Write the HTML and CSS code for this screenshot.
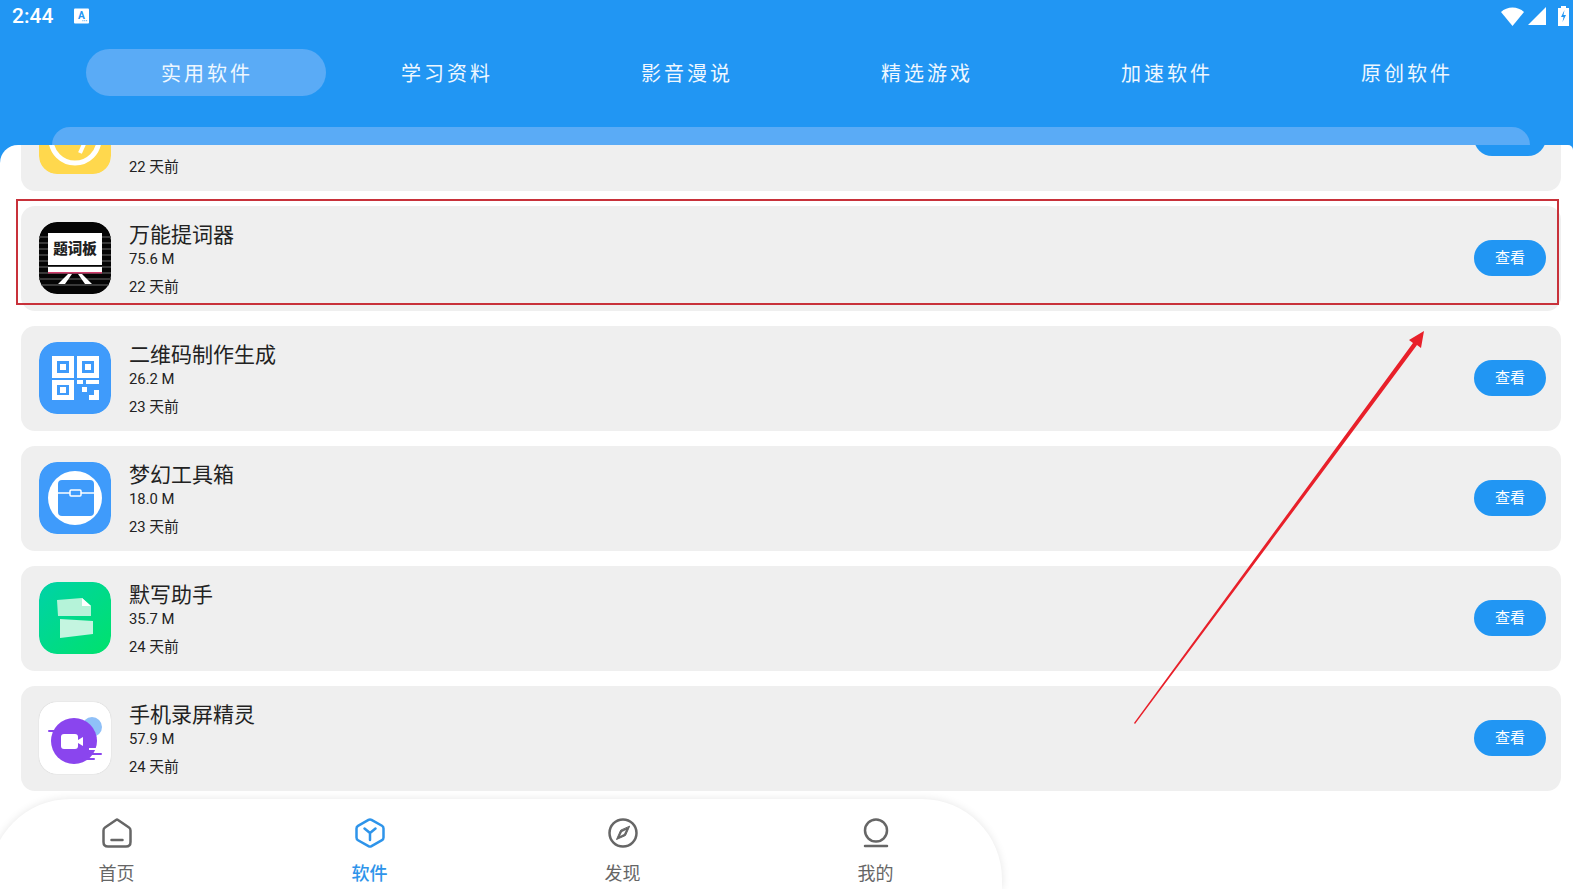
FILE: index.html
```html
<!DOCTYPE html>
<html lang="zh-CN">

<head>
    <meta charset="UTF-8">
    <title>软件</title>
    <link rel="stylesheet" href="styles.css">
</head>

<body>
    <header class="header">
        <div class="status">
            <span class="time">2:44</span>
            <svg class="status-a" viewBox="0 0 16 16">
                <rect width="16" height="16" rx="1" fill="#fff" />
                <text x="8" y="11" text-anchor="middle" class="status-a-text">A</text>
                <path d="M9 13h1M11 13h1M13 13h1" stroke="#2196f3" stroke-width="1" />
            </svg>
            <svg class="status-wifi" viewBox="0 0 23 19">
                <path d="M0 5C6-1 17-1 23 5L11.500 19Z" fill="#fff" />
            </svg>
            <svg class="status-signal" viewBox="0 0 18 18">
                <path d="M18 0V18H0Z" fill="#fff" />
            </svg>
            <svg class="status-battery" viewBox="0 0 11 20">
                <path d="M0 2H3V0H8V2H11V20H0Z" fill="#fff" />
                <path d="M6.500 4L3 11H5.500L4.500 16L8 9H5.500Z" fill="#2196f3" />
            </svg>
        </div>

        <nav class="tabs">
            <div class="tab tab-active">实用软件</div>
            <div class="tab">学习资料</div>
            <div class="tab">影音漫说</div>
            <div class="tab">精选游戏</div>
            <div class="tab">加速软件</div>
            <div class="tab">原创软件</div>
        </nav>

        <div class="header-bar"></div>
    </header>

    <main class="content">
        <div class="list">
            <div class="card">
                <svg class="app-icon" viewBox="0 0 72 72">
                    <rect width="72" height="72" rx="18" fill="#ffd84d" />
                    <circle cx="36" cy="37" r="24" fill="none" stroke="#fff" stroke-width="5" />
                    <path d="M45 42L41 51" stroke="#fff" stroke-width="4" />
                </svg>
                <div class="info">
                    <div class="name">&nbsp;</div>
                    <div class="size">&nbsp;</div>
                    <div class="date">22 天前</div>
                </div>
                <div class="view-btn"></div>
            </div>

            <div class="card">
                <svg class="app-icon" viewBox="0 0 72 72">
                    <rect width="72" height="72" rx="18" fill="#050505" />
                    <path d="M0 15H72M0 21H72M0 27H72M0 33H72M0 39H72M0 45H72M0 51H72M0 57H72M0 63H72" stroke="#383838" stroke-width="2" />
                    <rect x="9" y="11" width="54" height="32" fill="#fff" />
                    <text x="36" y="32" text-anchor="middle" class="board-text">题词板</text>
                    <rect x="9" y="45" width="54" height="6" fill="#fff" />
                    <rect x="9" y="50" width="54" height="1.500" fill="#d03a6a" />
                    <path d="M29 52L19 62H26L33 52ZM43 52L53 62H46L39 52Z" fill="#fff" />
                </svg>
                <div class="info">
                    <div class="name">万能提词器</div>
                    <div class="size">75.6 M</div>
                    <div class="date">22 天前</div>
                </div>
                <div class="view-btn">查看</div>
            </div>

            <div class="card">
                <svg class="app-icon" viewBox="0 0 72 72">
                    <rect width="72" height="72" rx="18" fill="#3f9bfb" />
                    <path d="M13 14H35V36H13ZM38 14H60V36H38ZM13 38H35V58H13Z" fill="#fff" />
                    <path d="M18 19H30V31H18ZM43 19H55V31H43ZM18 43H30V53H18Z" fill="#3f9bfb" />
                    <path d="M21 22H27V28H21ZM46 22H52V28H46ZM21 45H27V51H21ZM38 38H44V42H38ZM47 38H60V42H47ZM43 45H48V50H43ZM50 48H60V58H50Z" fill="#fff" />
                    <path d="M50 48H55V53H50Z" fill="#3f9bfb" />
                </svg>
                <div class="info">
                    <div class="name">二维码制作生成</div>
                    <div class="size">26.2 M</div>
                    <div class="date">23 天前</div>
                </div>
                <div class="view-btn">查看</div>
            </div>

            <div class="card">
                <svg class="app-icon" viewBox="0 0 72 72">
                    <rect width="72" height="72" rx="18" fill="#3f9bfb" />
                    <circle cx="36" cy="36" r="27" fill="#fff" />
                    <rect x="19" y="18" width="36" height="36" rx="4" fill="#3f9bfb" />
                    <path d="M19 31H55" stroke="#fff" stroke-width="1.500" />
                    <rect x="31" y="28" width="11" height="6" rx="1" fill="#3f9bfb" stroke="#fff" stroke-width="1.500" />
                </svg>
                <div class="info">
                    <div class="name">梦幻工具箱</div>
                    <div class="size">18.0 M</div>
                    <div class="date">23 天前</div>
                </div>
                <div class="view-btn">查看</div>
            </div>

            <div class="card">
                <svg class="app-icon" viewBox="0 0 72 72">
                    <defs>
                        <linearGradient id="greenGrad" x1="0" y1="0" x2="1" y2="1">
                            <stop offset="0" stop-color="#00d2a8" />
                            <stop offset="1" stop-color="#00e26c" />
                        </linearGradient>
                    </defs>
                    <rect width="72" height="72" rx="18" fill="url(#greenGrad)" />
                    <path d="M18 18L43 16L52 24V34L19 34Z" fill="#b5f3d9" />
                    <path d="M43 16L52 24H43Z" fill="#fff" />
                    <path d="M21 37L54 39V52L21 56Z" fill="#c4f5e0" />
                </svg>
                <div class="info">
                    <div class="name">默写助手</div>
                    <div class="size">35.7 M</div>
                    <div class="date">24 天前</div>
                </div>
                <div class="view-btn">查看</div>
            </div>

            <div class="card">
                <svg class="app-icon app-icon-border" viewBox="0 0 72 72">
                    <rect width="72" height="72" rx="18" fill="#fff" />
                    <circle cx="53" cy="25" r="10" fill="#8fc0f8" />
                    <circle cx="35" cy="39" r="23" fill="#8a45ee" />
                    <path d="M10 29H26M49 52H62M44 57H55" stroke="#8a45ee" stroke-width="2" stroke-linecap="round" />
                    <path d="M50 47H62" stroke="#fff" stroke-width="2" />
                    <rect x="22" y="32" width="17" height="15" rx="3" fill="#fff" />
                    <path d="M39 38L44 35V44L39 41Z" fill="#fff" />
                </svg>
                <div class="info">
                    <div class="name">手机录屏精灵</div>
                    <div class="size">57.9 M</div>
                    <div class="date">24 天前</div>
                </div>
                <div class="view-btn">查看</div>
            </div>
        </div>
    </main>

    <footer class="bottom-nav">
        <div class="nav-item">
            <svg class="nav-icon" viewBox="0 0 30 30">
                <path d="M14 2L3 9.500Q1.500 10.500 1.500 12.500V24Q1.500 28.500 6 28.500H24Q28.500 28.500 28.500 24V12.500Q28.500 10.500 27 9.500L16 2Q15 1.300 14 2Z" />
                <path d="M9.500 22H20.500" />
            </svg>
            <span>首页</span>
        </div>
        <div class="nav-item nav-item-active">
            <svg class="nav-icon" viewBox="0 0 30 30">
                <path d="M13.500 1.800L3 7.800Q1.500 8.700 1.500 10.500V19.500Q1.500 21.300 3 22.200L13.500 28.200Q15 29 16.500 28.200L27 22.200Q28.500 21.300 28.500 19.500V10.500Q28.500 8.700 27 7.800L16.500 1.800Q15 1 13.500 1.800Z" />
                <path d="M9.500 10.500L15 15L20.500 10.500M15 15V22" />
            </svg>
            <span>软件</span>
        </div>
        <div class="nav-item">
            <svg class="nav-icon" viewBox="0 0 30 30">
                <circle cx="15" cy="15" r="13.500" />
                <path class="nav-fill" d="M21.500 8.500L17.500 17.500L8.500 21.500L12.500 12.500Z" />
                <path class="nav-hole" d="M18 12L16 16L12 18L14 14Z" />
            </svg>
            <span>发现</span>
        </div>
        <div class="nav-item">
            <svg class="nav-icon" viewBox="0 0 30 30">
                <circle cx="15" cy="12.500" r="11" />
                <path d="M4 28H26" />
            </svg>
            <span>我的</span>
        </div>
    </footer>

    <!-- annotation drawn over the screenshot -->
    <div class="mark-box"></div>
    <svg class="mark-arrow" viewBox="0 0 1573 889">
        <path d="M1134 723L1413 343L1409 340L1424 331L1421 348L1417 345L1135 724Z" fill="#e8202a" />
    </svg>
</body>

</html>
```

FILE: styles.css
```css
* {
    margin: 0;
    padding: 0;
    box-sizing: border-box;
}

body {
    position: relative;
    width: 1573px;
    height: 889px;
    overflow: hidden;
    display: flex;
    flex-direction: column;
    font-family: Roboto, "Noto Sans CJK SC", sans-serif;
    background: linear-gradient(#2196f3 170px, white 170px);
}

.header {
    height: 145px;
    background: #2196f3;
    flex-shrink: 0;
}

.status {
    height: 32px;
    display: flex;
    align-items: center;
    padding: 0 4px 0 12px;
    color: white;
}

.time {
    font-size: 21px;
    font-weight: 500;
    width: 62px;
}

.status-a {
    width: 15px;
    height: 16px;
}

.status-a-text {
    font-size: 11px;
    font-weight: 700;
    fill: #2196f3;
}

.status-wifi {
    width: 23px;
    height: 19px;
    margin-left: auto;
}

.status-signal {
    width: 18px;
    height: 18px;
    margin-left: 4px;
}

.status-battery {
    width: 11px;
    height: 20px;
    margin-left: 12px;
}

.tabs {
    display: flex;
    margin: 17px 0 0 86px;
}

.tab {
    width: 240px;
    height: 47px;
    line-height: 51px;
    padding-left: 2px;
    border-radius: 24px;
    text-align: center;
    color: #eef7ff;
    font-size: 20px;
    letter-spacing: 3px;
}

.tab-active {
    background: #5aabf6;
}

.header-bar {
    height: 18px;
    margin: 31px 43px 0 52px;
    border-radius: 20px 20px 0 0;
    background: #5aabf6;
}

.content {
    height: 654px;
    flex-shrink: 0;
    overflow: hidden;
    background: white;
    border-radius: 18px 5px 0 0;
}

.list {
    display: flex;
    flex-direction: column;
    gap: 15px;
    margin: -59px 12px 0 21px;
}

.card {
    height: 105px;
    display: flex;
    align-items: flex-start;
    padding: 16px 15px 0 18px;
    border-radius: 14px;
    background: #efefef;
}

.app-icon {
    width: 72px;
    height: 72px;
    flex-shrink: 0;
    border-radius: 18px;
}

.app-icon-border {
    box-shadow: 0 0 1px #bbb;
}

.board-text {
    font-size: 14.500px;
    font-weight: 900;
    fill: #222;
}

.info {
    margin-left: 18px;
    color: #222;
}

.name {
    height: 26px;
    line-height: 26px;
    font-size: 21px;
}

.size {
    height: 20px;
    line-height: 20px;
    margin-top: 1px;
    font-size: 14.800px;
}

.date {
    height: 20px;
    line-height: 20px;
    margin-top: 8px;
    font-size: 14.800px;
}

.view-btn {
    width: 72px;
    height: 36px;
    line-height: 37px;
    margin: 18px 0 0 auto;
    border-radius: 18px;
    text-align: center;
    color: white;
    font-size: 15px;
    background: #2196f3;
}

.bottom-nav {
    flex-shrink: 0;
    height: 90px;
    width: 1012px;
    margin-left: -10px;
    display: flex;
    border-radius: 80px 80px 0 0;
    background: white;
    box-shadow: 0 0 8px rgba(0, 0, 0, 0.1);
}

.nav-item {
    flex: 1;
    display: flex;
    flex-direction: column;
    align-items: center;
    padding-top: 19px;
    color: #666;
    font-size: 18px;
}

.nav-item span {
    margin-top: 13px;
    line-height: 26px;
}

.nav-item-active {
    color: #2e94ea;
    font-weight: 500;
}

.nav-icon {
    width: 30px;
    height: 30px;
    fill: none;
    stroke: currentColor;
    stroke-width: 2.500;
    stroke-linecap: round;
    stroke-linejoin: round;
}

.nav-fill {
    fill: currentColor;
    stroke-width: 1;
}

.nav-hole {
    fill: white;
    stroke: none;
}

.mark-box {
    position: absolute;
    left: 16px;
    top: 199px;
    width: 1543px;
    height: 106px;
    border: 2px solid #c8313a;
}

.mark-arrow {
    position: absolute;
    left: 0;
    top: 0;
    width: 1573px;
    height: 889px;
    pointer-events: none;
}
```
